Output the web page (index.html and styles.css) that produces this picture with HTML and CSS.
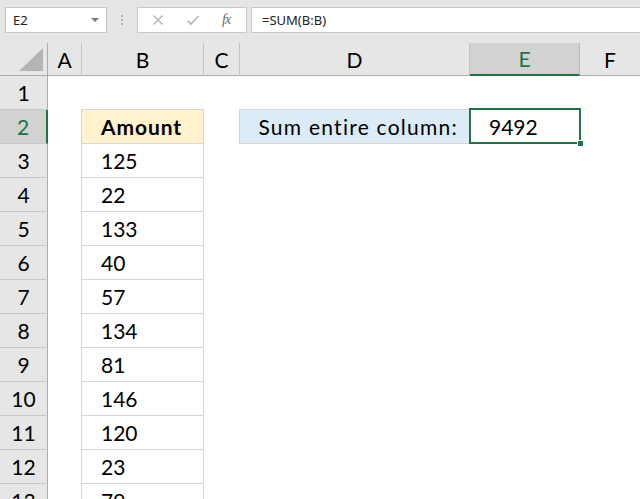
FILE: index.html
```html
<!DOCTYPE html>
<html>
<head>
<meta charset="utf-8">
<link rel="stylesheet" href="styles.css">
</head>
<body>
<div class="toolbar">
  <div class="namebox"><span>E2</span><span class="caret"></span></div>
  <div class="dots"><i></i><i></i><i></i></div>
  <div class="fbuttons">
    <svg class="ic-x" width="12" height="12" viewBox="0 0 12 12"><path d="M1.5 1.5 L10.5 10.5 M10.5 1.5 L1.5 10.5" stroke="#b3b3b3" stroke-width="1.4" fill="none"/></svg>
    <svg class="ic-ok" width="14" height="12" viewBox="0 0 14 12"><path d="M1.5 6.5 L5 10 L12.5 2" stroke="#b3b3b3" stroke-width="1.6" fill="none"/></svg>
    <span class="fx">fx</span>
  </div>
  <div class="finput">=SUM(B:B)</div>
</div>
<div class="sheet">
  <div class="row hdr">
    <div class="rh corner"><svg width="26" height="25" viewBox="0 0 26 25"><polygon points="25,1 25,24 1,24" fill="#b4b4b4"/></svg></div>
    <div class="ch">A</div><div class="ch">B</div><div class="ch">C</div><div class="ch">D</div><div class="ch sel">E</div><div class="ch last">F</div>
  </div>
  <div class="row"><div class="rh">1</div><div></div><div></div><div></div><div></div><div></div><div></div></div>
  <div class="row"><div class="rh sel">2</div><div></div><div class="tb head">Amount</div><div></div><div class="label">Sum entire column:</div><div class="active">9492<span class="frame"><span class="handle"></span></span></div><div></div></div>
  <div class="row"><div class="rh">3</div><div></div><div class="tb">125</div><div></div><div></div><div></div><div></div></div>
  <div class="row"><div class="rh">4</div><div></div><div class="tb">22</div><div></div><div></div><div></div><div></div></div>
  <div class="row"><div class="rh">5</div><div></div><div class="tb">133</div><div></div><div></div><div></div><div></div></div>
  <div class="row"><div class="rh">6</div><div></div><div class="tb">40</div><div></div><div></div><div></div><div></div></div>
  <div class="row"><div class="rh">7</div><div></div><div class="tb">57</div><div></div><div></div><div></div><div></div></div>
  <div class="row"><div class="rh">8</div><div></div><div class="tb">134</div><div></div><div></div><div></div><div></div></div>
  <div class="row"><div class="rh">9</div><div></div><div class="tb">81</div><div></div><div></div><div></div><div></div></div>
  <div class="row"><div class="rh">10</div><div></div><div class="tb">146</div><div></div><div></div><div></div><div></div></div>
  <div class="row"><div class="rh">11</div><div></div><div class="tb">120</div><div></div><div></div><div></div><div></div></div>
  <div class="row"><div class="rh">12</div><div></div><div class="tb">23</div><div></div><div></div><div></div><div></div></div>
  <div class="row"><div class="rh">13</div><div></div><div class="tb">79</div><div></div><div></div><div></div><div></div></div>
</div>
</body>
</html>
```
FILE: styles.css
```css
* { box-sizing: border-box; }
html, body { margin: 0; padding: 0; }
body {
  width: 640px;
  height: 499px;
  overflow: hidden;
  background: #ffffff;
  font-family: Lato, "Open Sans", sans-serif;
}
.toolbar {
  height: 43px;
  background: #e6e6e6;
  display: flex;
  align-items: flex-start;
  padding: 7px 0 0 5px;
}
.namebox {
  width: 102px;
  height: 26px;
  background: #fff;
  border: 1px solid #c6c6c6;
  display: flex;
  align-items: center;
  justify-content: space-between;
  padding: 0 7px 0 7px;
  font-family: "Noto Sans", sans-serif;
  font-size: 13px;
  color: #222;
}
.caret {
  width: 0; height: 0;
  border-left: 4px solid transparent;
  border-right: 4px solid transparent;
  border-top: 4px solid #7a7a7a;
  margin-bottom: 1px;
}
.dots {
  width: 30px;
  height: 26px;
  display: flex;
  flex-direction: column;
  align-items: center;
  justify-content: center;
  gap: 2px;
}
.dots i {
  display: block;
  width: 2px; height: 2px;
  background: #b0b0b0;
}
.fbuttons {
  width: 110px;
  height: 26px;
  background: #fff;
  border: 1px solid #c6c6c6;
  display: flex;
  align-items: center;
  padding-left: 14px;
}
.ic-x { margin-right: 22px; }
.ic-ok { margin-right: 22px; }
.fx {
  font-family: "Liberation Serif", serif;
  font-style: italic;
  font-size: 14px;
  color: #666;
  letter-spacing: -1px;
}
.finput {
  margin-left: 4px;
  flex: 1;
  height: 26px;
  background: #fff;
  border: 1px solid #c6c6c6;
  border-right: none;
  font-family: "Noto Sans", sans-serif;
  font-size: 13px;
  color: #222;
  padding-left: 10px;
  display: flex;
  align-items: center;
}
.sheet { display: flex; flex-direction: column; }
.row {
  display: grid;
  grid-template-columns: 48px 34px 122px 36px 230px 110px 60px;
  height: 34px;
  font-size: 21px;
  color: #000;
}
.row > div {
  display: flex;
  align-items: center;
  position: relative;
}
.row.hdr { height: 33px; background: #e6e6e6; }
.ch {
  justify-content: center;
  border-right: 1px solid #c3c3c3;
  border-bottom: 1px solid #ababab;
}
.ch.last { border-right: none; }
.ch.sel {
  background: #d2d2d2;
  color: #217346;
  border-bottom: 2px solid #217346;
  border-right: 1px solid #b8b8b8;
}
.rh {
  background: #e6e6e6;
  justify-content: center;
  border-right: 1px solid #ababab;
  border-bottom: 1px solid #c8c8c8;
}
.rh.corner {
  border-bottom: 1px solid #ababab;
  justify-content: flex-end;
  align-items: flex-end;
  padding: 0 3px 3px 0;
}
.rh.sel {
  background: #d2d2d2;
  color: #217346;
  border-right: 2px solid #217346;
}
.tb {
  border-right: 1px solid #d6d6d6;
  border-bottom: 1px solid #d6d6d6;
  box-shadow: -1px 0 0 #d6d6d6;
  padding-left: 19px;
}
.tb.head {
  background: #fff2cc;
  font-weight: 700;
  letter-spacing: 0.9px;
  box-shadow: -1px 0 0 #d6d6d6, 0 -1px 0 #d6d6d6, -1px -1px 0 #d6d6d6;
}
.label {
  background: #ddebf7;
  justify-content: flex-end;
  padding-right: 12px;
  letter-spacing: 1.25px;
  border-bottom: 1px solid #d6d6d6;
  box-shadow: -1px 0 0 #d6d6d6, 0 -1px 0 #d6d6d6, -1px -1px 0 #d6d6d6;
}
.active {
  padding-left: 19px;
  padding-bottom: 1px;
}
.frame {
  position: absolute;
  top: -2px; left: -1px; right: -1px; bottom: 0px;
  border: 2px solid #217346;
}
.handle {
  position: absolute;
  right: -4px; bottom: -4px;
  width: 6px; height: 6px;
  background: #217346;
  border: 1px solid #fff;
  border-right: none;
  border-bottom: none;
}
```
